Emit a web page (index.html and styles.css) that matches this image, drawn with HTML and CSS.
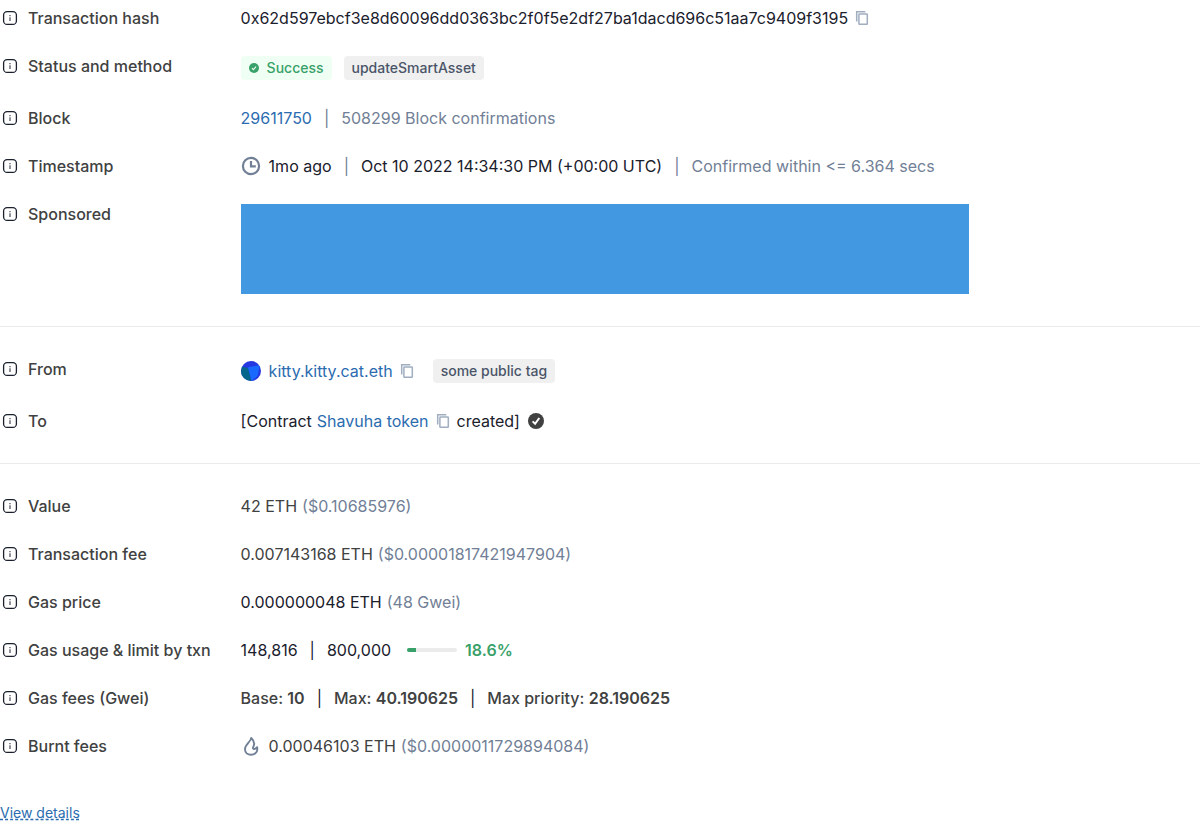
FILE: index.html
```html
<!DOCTYPE html>
<html lang="en">
<head>
<meta charset="utf-8">
<title>Transaction details</title>
<link rel="stylesheet" href="styles.css">
</head>
<body>
<svg class="sprite" aria-hidden="true">
  <symbol id="info" viewBox="0 0 20 20"><rect x="3.6" y="3.6" width="12.8" height="12.8" rx="3.5" fill="none" stroke="#1a202c" stroke-width="1.3"/><path d="M9.300 7h1.400v1.200H9.300zM9.300 9.200h1.400v3.800H9.300z" fill="#1a202c" opacity=".7"/></symbol>
  <symbol id="copy" viewBox="0 0 20 20"><path d="M4.7 13.5V3.8h8.6" fill="none" stroke="currentColor" stroke-width="1.5"/><rect x="6.9" y="5.9" width="8.4" height="10.4" rx=".6" fill="none" stroke="currentColor" stroke-width="1.5"/></symbol>
</svg>
<main>
<dl class="details">
  <dt class="label"><svg class="icon"><use href="#info"/></svg>Transaction hash</dt>
  <dd class="value"><span>0x62d597ebcf3e8d60096dd0363bc2f0f5e2df27ba1dacd696c51aa7c9409f3195</span><button class="copy" aria-label="Copy hash"><svg class="icon"><use href="#copy"/></svg></button></dd>

  <dt class="label"><svg class="icon"><use href="#info"/></svg>Status and method</dt>
  <dd class="value tall"><span class="tag success"><svg class="tag-icon" viewBox="0 0 10 10"><circle cx="5" cy="5" r="5" fill="#38a169"/><path d="M2.9 5.2l1.5 1.4 2.7-3" fill="none" stroke="#f0fff4" stroke-width="1.1"/></svg>Success</span><span class="tag method">updateSmartAsset</span></dd>

  <dt class="label"><svg class="icon"><use href="#info"/></svg>Block</dt>
  <dd class="value"><a href="#block">29611750</a><span class="sep muted">|</span><span class="muted">508299 Block confirmations</span></dd>

  <dt class="label"><svg class="icon"><use href="#info"/></svg>Timestamp</dt>
  <dd class="value"><svg class="icon lead" viewBox="0 0 20 20"><g fill="none" stroke="#718096" stroke-width="2.2"><circle cx="10" cy="10" r="8.100"/><path d="M10 5V10.300h4.800"/></g></svg><span>1mo ago</span><span class="sep muted">|</span><span>Oct 10 2022 14:34:30 PM (+00:00 UTC)</span><span class="sep muted">|</span><span class="muted">Confirmed within &lt;= 6.364 secs</span></dd>

  <dt class="label"><svg class="icon"><use href="#info"/></svg>Sponsored</dt>
  <dd class="value sponsor"><div class="banner"></div></dd>

  <div class="divider"></div>

  <dt class="label"><svg class="icon"><use href="#info"/></svg>From</dt>
  <dd class="value tall"><svg class="icon lead" viewBox="0 0 20 20"><clipPath id="round"><circle cx="10" cy="10" r="10"/></clipPath><g clip-path="url(#round)"><path fill="#2639e0" d="M0 0h20v20H0z"/><path fill="#05668c" d="M0 5.500L7 7l3.500 13H0z"/><path fill="#1769ff" d="M7 6.300L19 4l-2.500 11L10.500 20z"/></g></svg><a href="#from">kitty.kitty.cat.eth</a><button class="copy" aria-label="Copy sender address"><svg class="icon"><use href="#copy"/></svg></button><span class="tag public">some public tag</span></dd>

  <dt class="label"><svg class="icon"><use href="#info"/></svg>To</dt>
  <dd class="value"><span class="before">[Contract</span><a href="#to">Shavuha token</a><button class="copy" aria-label="Copy contract address"><svg class="icon"><use href="#copy"/></svg></button><span class="created">created]</span><svg class="check" viewBox="0 0 16 16"><circle cx="8" cy="8" r="8" fill="#404141"/><path d="M4.600 8.400l2.500 2.400L11.300 5" fill="none" stroke="#fff" stroke-width="2"/></svg></dd>

  <div class="divider"></div>

  <dt class="label"><svg class="icon"><use href="#info"/></svg>Value</dt>
  <dd class="value soft"><span>42 ETH</span><span class="fiat">($0.10685976)</span></dd>

  <dt class="label"><svg class="icon"><use href="#info"/></svg>Transaction fee</dt>
  <dd class="value soft"><span>0.007143168 ETH</span><span class="fiat">($0.00001817421947904)</span></dd>

  <dt class="label"><svg class="icon"><use href="#info"/></svg>Gas price</dt>
  <dd class="value"><span>0.000000048 ETH</span><span class="fiat">(48 Gwei)</span></dd>

  <dt class="label"><svg class="icon"><use href="#info"/></svg>Gas usage &amp; limit by txn</dt>
  <dd class="value"><span>148,816</span><span class="sep">|</span><span>800,000</span><span class="track"><span class="fill" style="width:18.6%"></span></span><span class="percent">18.6%</span></dd>

  <dt class="label"><svg class="icon"><use href="#info"/></svg>Gas fees (Gwei)</dt>
  <dd class="value fees"><span>Base: <b>10</b></span><span class="sep">|</span><span>Max: <b>40.190625</b></span><span class="sep">|</span><span>Max priority: <b>28.190625</b></span></dd>

  <dt class="label"><svg class="icon"><use href="#info"/></svg>Burnt fees</dt>
  <dd class="value soft"><svg class="icon lead" viewBox="0 0 20 20"><path d="M10.200 2C9.800 6 4 8.500 4 13.200c0 3.400 2.700 5.600 6 5.600s6.300-2.300 6.300-5.400c0-.8 0-1.500-.2-2.300-.9 1.400-2.400 2.200-3.600 1.700-1.600-.7.700-2.500.7-5 0-2-1.200-4.200-3-5.800z" fill="none" stroke="#718096" stroke-width="1.900" stroke-linejoin="round"/></svg><span>0.00046103 ETH</span><span class="fiat">($0.0000011729894084)</span></dd>
</dl>
<a class="more" href="#details">View details</a>
</main>
</body>
</html>
```

FILE: styles.css
```css
body {
  margin: 0;
  background: #fff;
  color: #1a202c;
  font: 400 16px/24px Inter, sans-serif;
}

.sprite {
  display: none;
}

.details {
  display: grid;
  grid-template-columns: max-content minmax(0, 1fr);
  gap: 24px 30px;
  margin: 0;
  padding-top: 6px;
}

.label {
  display: flex;
  align-items: center;
  align-self: start;
  gap: 8px;
  color: #404141;
  font-weight: 500;
}

.value {
  display: flex;
  flex-wrap: wrap;
  align-items: center;
  margin: 0;
}

.tall {
  min-height: 28px;
}

.soft,
.fees {
  color: #404141;
}

.fees {
  font-weight: 500;
}

.fees b {
  font-weight: 600;
}

.icon {
  display: block;
  flex: none;
  width: 20px;
  height: 20px;
}

.lead {
  margin-right: 8px;
}

a {
  color: #2b6cb0;
  text-decoration: none;
}

.muted,
.fiat {
  color: #718096;
}

.fiat {
  margin-left: 5px;
}

.sep {
  margin: 0 12px;
}

.fees .sep {
  color: #1a202c;
  font-weight: 400;
}

.copy {
  margin: 0 0 0 4px;
  padding: 0;
  border: 0;
  background: none;
  color: #a0aec0;
  cursor: pointer;
}

.tag {
  display: flex;
  align-items: center;
  border-radius: 4px;
  padding: 2px 8px;
  background: #f0f0f0;
  color: #4a5568;
  font-size: 14px;
  line-height: 20px;
  font-weight: 500;
}

.success {
  gap: 8px;
  background: #f0fff4;
  color: #38a169;
}

.tag-icon {
  width: 10px;
  height: 10px;
}

.method {
  margin-left: 12px;
}

.public {
  margin-left: 16px;
}

.sponsor {
  padding: 2px 0;
}

.banner {
  flex: 0 1 728px;
  height: 90px;
  background: #4299e1;
}

.divider {
  grid-column: 1 / -1;
  margin: 6px 0;
  border-top: 1px solid #ebebeb;
}

.before {
  margin-right: 5px;
}

.created {
  margin: 0 8px 0 4px;
}

.check {
  width: 16px;
  height: 16px;
}

.track {
  width: 50px;
  height: 4px;
  margin: 0 8px 0 16px;
  overflow: hidden;
  border-radius: 4px;
  background: #ebebeb;
}

.fill {
  display: block;
  height: 100%;
  background: #38a169;
}

.percent {
  color: #38a169;
  font-weight: 600;
}

.more {
  display: table;
  margin-top: 45px;
  font-size: 14px;
  line-height: 20px;
  text-decoration: underline dashed;
}
```
